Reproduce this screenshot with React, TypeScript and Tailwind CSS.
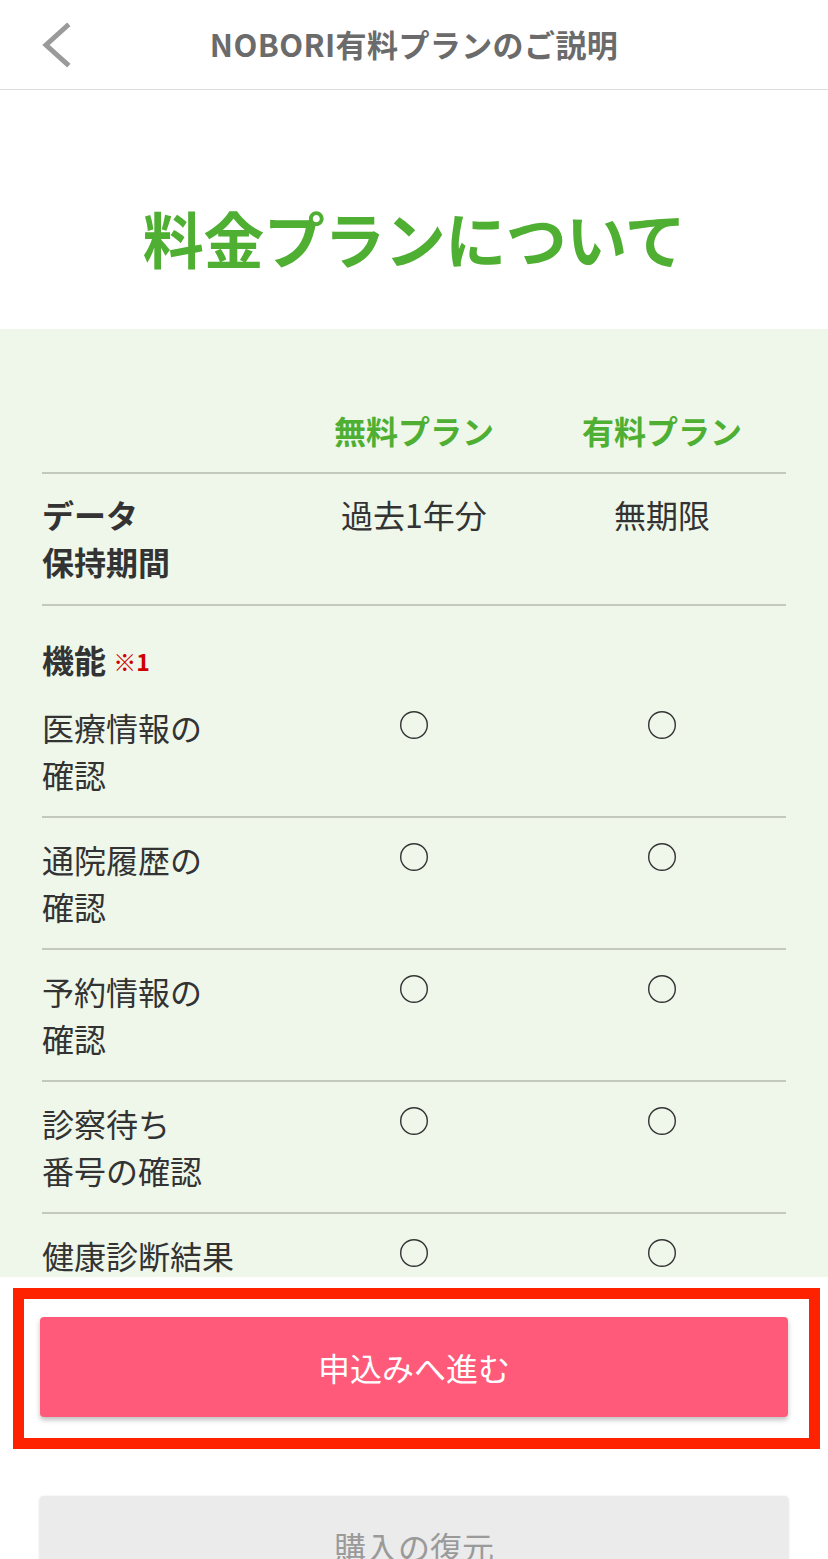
import React from 'react';

interface FeatureRow {
  label: string[];
  free: boolean;
  paid: boolean;
}

const features: FeatureRow[] = [
  { label: ['医療情報の', '確認'], free: true, paid: true },
  { label: ['通院履歴の', '確認'], free: true, paid: true },
  { label: ['予約情報の', '確認'], free: true, paid: true },
  { label: ['診察待ち', '番号の確認'], free: true, paid: true },
  { label: ['健康診断結果'], free: true, paid: true },
];

const font = { fontFamily: '"Noto Sans CJK JP", "Noto Sans", sans-serif' };

const Mark: React.FC = () => (
  <svg width="30" height="30" viewBox="0 0 30 30" className="mx-auto mt-[6px]">
    <circle cx="15" cy="15" r="13.3" fill="none" stroke="#333" strokeWidth="1.4" />
  </svg>
);

const Rule: React.FC = () => <div className="h-[2px] bg-[#c4c9c0]" />;

const App: React.FC = () => {
  return (
    <div className="w-[828px] h-[1559px] overflow-hidden bg-white flex flex-col" style={font}>
      {/* header */}
      <div className="h-[90px] shrink-0 border-b border-[#dcdcdc] relative flex items-center justify-center">
        <svg width="40" height="50" viewBox="0 0 40 50" className="absolute left-[36px] top-[20px]">
          <polyline points="31,6 10,25 31,44" fill="none" stroke="#9a9a9a" strokeWidth="5" strokeLinecap="square" />
        </svg>
        <span className="text-[31px] font-bold text-[#6b6b6b] leading-none tracking-[0.4px] -mt-[2px]">
          NOBORI有料プランのご説明
        </span>
      </div>

      {/* page title */}
      <div className="h-[239px] shrink-0 flex items-center justify-center">
        <h1 className="text-[61px] font-bold text-[#4faf32] leading-none mt-[56px] tracking-[-0.5px]">
          料金プランについて
        </h1>
      </div>

      {/* comparison table */}
      <div className="h-[948px] shrink-0 overflow-hidden bg-[#eef7ea] px-[42px] pt-[78px] text-[32px] leading-[47px] text-[#333]">
        <div className="grid grid-cols-3 pb-[18px]">
          <div />
          <div className="text-center font-bold text-[#4faf32]">無料プラン</div>
          <div className="text-center font-bold text-[#4faf32]">有料プラン</div>
        </div>
        <Rule />
        <div className="grid grid-cols-3 pt-[17px] pb-[19px]">
          <div className="font-bold">
            データ
            <br />
            保持期間
          </div>
          <div className="text-center">過去1年分</div>
          <div className="text-center">無期限</div>
        </div>
        <Rule />
        <div className="pt-[30px] pb-[19px] font-bold">
          機能 <span className="text-[23px] text-[#d00000] align-[2px]">※1</span>
        </div>
        {features.map((f, i) => (
          <div key={i}>
            {i > 0 && <Rule />}
            <div className={`grid grid-cols-3 ${i > 0 ? 'pt-[18px]' : ''} pb-[18px]`}>
              <div>
                {f.label.map((l, j) => (
                  <div key={j}>{l}</div>
                ))}
              </div>
              <div>{f.free && <Mark />}</div>
              <div>{f.paid && <Mark />}</div>
            </div>
          </div>
        ))}
      </div>

      {/* actions */}
      <div className="flex-1 pt-[11px] flex flex-col">
        <div className="ml-[13px] mr-[8px] border-[11px] border-[#ff2200] pl-[16px] pr-[21px] pt-[18px] pb-[21px]">
          <button className="w-full h-[100px] rounded-[4px] bg-[#ff5a79] text-white text-[32px] shadow-[0_3px_5px_rgba(0,0,0,0.25)]">
            申込みへ進む
          </button>
        </div>
        <div className="px-[40px] pt-[47px]">
          <button className="w-full h-[100px] rounded-[4px] bg-[#ebebeb] text-[#9a9a9a] text-[32px] shadow-[0_1px_3px_rgba(0,0,0,0.2)]">
            購入の復元
          </button>
        </div>
      </div>
    </div>
  );
};

export default App;
